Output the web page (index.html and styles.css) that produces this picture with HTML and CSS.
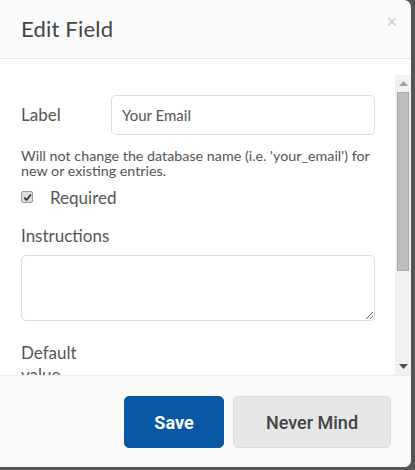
FILE: index.html
```html
<!DOCTYPE html>
<html>
<head>
<meta charset="utf-8">
<link rel="stylesheet" href="styles.css">
</head>
<body>
<div class="modal">
  <div class="modal-header">
    <h2 class="title">Edit Field</h2>
    <span class="close">×</span>
  </div>
  <div class="modal-body">
    <div class="scroll">
      <div class="row">
        <label class="row-label">Label</label>
        <input class="text-input" type="text" value="Your Email">
      </div>
      <p class="help">Will not change the database name (i.e. 'your_email') for new or existing entries.</p>
      <label class="check-row">
        <span class="checkbox"><svg width="9" height="9" viewBox="0 0 10 10"><path d="M1.3 5.2 L4 7.8 L8.8 1.6" fill="none" stroke="#333" stroke-width="2"/></svg></span>
        <span>Required</span>
      </label>
      <div class="block-label">Instructions</div>
      <textarea class="textarea"></textarea>
      <div class="default-label">Default value</div>
      <input class="text-input full" type="text">
    </div>
    <div class="scrollbar">
      <div class="sb-btn"><svg width="9" height="5" viewBox="0 0 9 5"><path d="M0 5 L4.5 0 L9 5 Z" fill="#a3a3a3"/></svg></div>
      <div class="sb-track"><div class="sb-thumb"></div></div>
      <div class="sb-btn"><svg width="9" height="5" viewBox="0 0 9 5"><path d="M0 0 L9 0 L4.5 5 Z" fill="#505050"/></svg></div>
    </div>
  </div>
  <div class="modal-footer">
    <button class="btn btn-primary">Save</button>
    <button class="btn btn-default">Never Mind</button>
  </div>
</div>
</body>
</html>
```
FILE: styles.css
```css
html, body {
  margin: 0;
  padding: 0;
}
body {
  background: #555555;
  width: 415px;
  height: 470px;
  overflow: hidden;
  font-family: "Lato", "Open Sans", sans-serif;
}
.modal {
  width: 411px;
  height: 467px;
  background: #fafafa;
  border-radius: 0 7px 7px 0;
  display: flex;
  flex-direction: column;
  overflow: hidden;
}
.modal-header {
  height: 58px;
  border-bottom: 1px solid #e5e5e5;
  display: flex;
  align-items: center;
  justify-content: space-between;
  padding: 0 14px 0 21px;
  flex: none;
}
.title {
  margin: -2px 0 0 0;
  font-size: 22px;
  font-weight: 400;
  color: #444;
  letter-spacing: 0.2px;
}
.close {
  color: #c8c8c8;
  font-size: 18px;
  font-family: "Liberation Sans", sans-serif;
  align-self: flex-start;
  margin-top: 12px;
}
.modal-body {
  flex: none;
  height: 300px;
  background: #fff;
  padding-top: 16px;
  display: flex;
}
.scroll {
  flex: 1;
  min-width: 0;
  height: 300px;
  overflow: hidden;
  padding: 20px 20px 0 21px;
  box-sizing: border-box;
}
.scrollbar {
  width: 16px;
  flex: none;
  background: #f1f1f1;
  display: flex;
  flex-direction: column;
}
.sb-btn {
  height: 17px;
  flex: none;
  display: flex;
  align-items: center;
  justify-content: center;
}
.sb-track {
  flex: 1;
  padding: 0 2px;
}
.sb-thumb {
  height: 179px;
  background: #bdbdbd;
  box-shadow: inset 0 0 0 1px #aaaaaa;
}
.row {
  display: flex;
  align-items: flex-start;
}
.row-label {
  width: 90px;
  flex: none;
  font-size: 17px;
  color: #555;
  line-height: 22px;
  padding-top: 9px;
}
.text-input {
  flex: 1;
  min-width: 0;
  height: 40px;
  box-sizing: border-box;
  border: 1px solid #ddd;
  border-radius: 5px;
  padding: 0 10px;
  font-family: inherit;
  font-size: 15px;
  color: #555;
  margin: 0;
}
.text-input.full {
  display: block;
  width: 100%;
  margin-top: 6px;
}
.help {
  margin: 13px 0 0 0;
  font-size: 14.3px;
  line-height: 15px;
  color: #555;
}
.check-row {
  display: flex;
  align-items: center;
  margin-top: 9px;
  font-size: 17px;
  color: #555;
  height: 20px;
}
.checkbox {
  width: 10px;
  height: 10px;
  border: 1px solid #9a9a9a;
  border-radius: 2px;
  background: #dedede;
  margin: 0 17px 0 0;
  display: flex;
  align-items: center;
  justify-content: center;
}
.block-label {
  margin-top: 18px;
  font-size: 17px;
  color: #555;
  line-height: 22px;
}
.textarea {
  display: block;
  width: 100%;
  box-sizing: border-box;
  height: 66px;
  border: 1px solid #ddd;
  border-radius: 5px;
  margin: 8px 0 0 0;
  resize: vertical;
}
.default-label {
  width: 90px;
  margin-top: 21px;
  font-size: 17px;
  color: #555;
  line-height: 22px;
}
.modal-footer {
  flex: none;
  height: 92px;
  border-top: 1px solid #eee;
  background: #fafafa;
  display: flex;
  justify-content: flex-end;
  align-items: flex-start;
  padding: 20px 20px 0 0;
  gap: 9px;
  box-sizing: border-box;
}
.btn {
  height: 52px;
  padding: 0 29px;
  border-radius: 5px;
  font-family: "Roboto", sans-serif;
  font-size: 18px;
  cursor: pointer;
}
.btn-primary {
  background: #0a58a5;
  border: 1px solid #0a58a5;
  color: #fff;
  font-weight: 700;
  width: 100px;
}
.btn-default {
  background: #e6e6e6;
  border: 1px solid #dcdcdc;
  color: #444;
  font-weight: 500;
  width: 158px;
}
```
